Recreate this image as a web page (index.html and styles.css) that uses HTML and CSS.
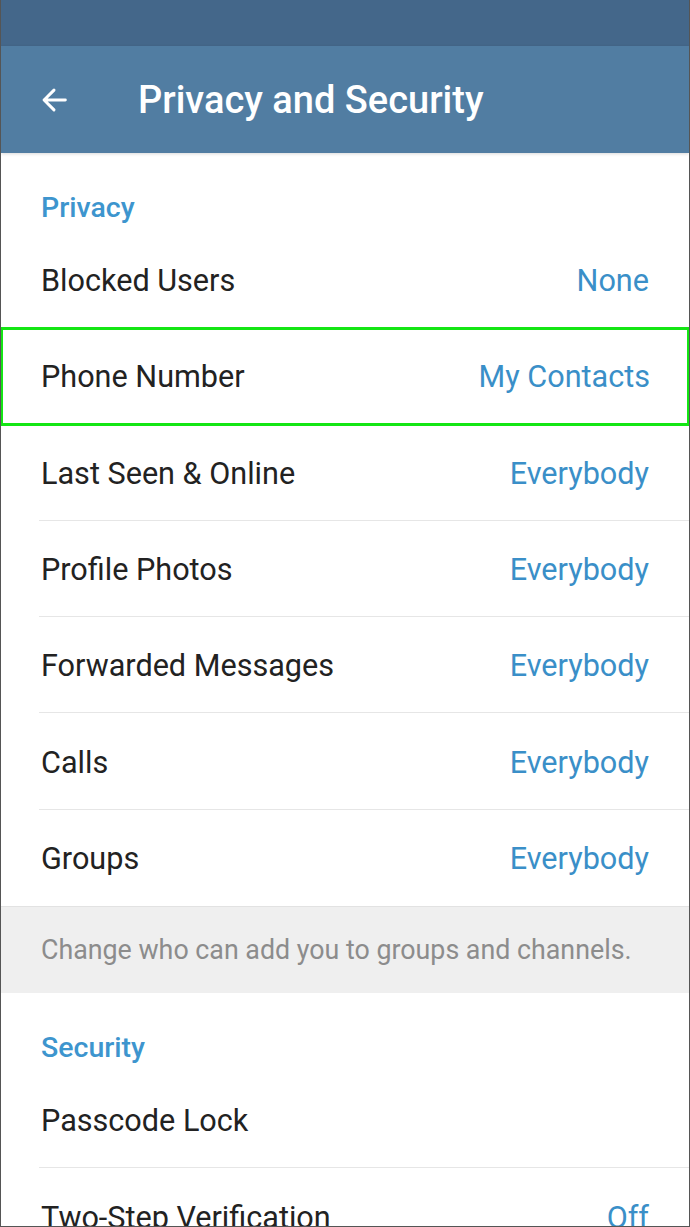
FILE: index.html
```html
<!doctype html>
<html lang="en">
<head>
	<meta charset="UTF-8">
	<title>Privacy and Security</title>
	<link rel="stylesheet" href="styles.css">
</head>
<body>
<div class="screen">
	<div class="statusbar"></div>
	<div class="toolbar">
		<a href="javascript:;" class="back">
			<svg width="34" height="34" viewBox="0 0 24 24"><path d="M20 12H5M12 5l-7 7 7 7" fill="none" stroke="#fff" stroke-width="2.1" stroke-linecap="round" stroke-linejoin="round"/></svg>
		</a>
		<h1>Privacy and Security</h1>
	</div>

	<div class="section">
		<h2>Privacy</h2>
		<ul class="list">
			<li><span>Blocked Users</span><em>None</em></li>
			<li class="hl"><span>Phone Number</span><em>My Contacts</em></li>
			<li><span>Last Seen &amp; Online</span><em>Everybody</em></li>
			<li><span>Profile Photos</span><em>Everybody</em></li>
			<li><span>Forwarded Messages</span><em>Everybody</em></li>
			<li><span>Calls</span><em>Everybody</em></li>
			<li class="last"><span>Groups</span><em>Everybody</em></li>
		</ul>
	</div>
	<p class="hint">Change who can add you to groups and channels.</p>

	<div class="section">
		<h2>Security</h2>
		<ul class="list">
			<li><span>Passcode Lock</span></li>
			<li class="last"><span>Two-Step Verification</span><em>Off</em></li>
		</ul>
	</div>
</div>
</body>
</html>
```

FILE: styles.css
```css
*{
	margin: 0;
	padding: 0;
	box-sizing: border-box;
}
ul {
	list-style: none;
}
html, body {
	height: 100%;
	overflow: hidden;
}
body {
	font-family: Roboto, "Noto Sans", sans-serif;
	background: #fff;
}

.screen {
	height: 1227px;
	border: 1px solid #555;
	border-top: 0;
	overflow: hidden;
}

.statusbar {
	height: 46px;
	background: #44678a;
}
.toolbar {
	height: 107px;
	background: #517da2;
	display: flex;
	align-items: center;
	padding-left: 36px;
	box-shadow: 0 1px 3px rgba(0,0,0,.15);
	position: relative;
}
.toolbar .back {
	display: block;
	width: 34px;
	height: 34px;
	margin-right: 67px;
}
.toolbar svg {
	display: block;
}
.toolbar h1 {
	color: #fff;
	font-size: 38px;
	font-weight: 500;
}

.section h2 {
	height: 79px;
	padding: 38px 0 0 40px;
	color: #3d95ce;
	font-size: 28.5px;
	font-weight: 500;
}

.list li {
	height: 96.3px;
	margin-left: 38px;
	padding: 0 40px 0 2px;
	display: flex;
	align-items: center;
	justify-content: space-between;
	border-bottom: 1px solid #e6e6e6;
	font-size: 30.6px;
	color: #222;
}
.list li span, .list li em {
	position: relative;
	top: 1px;
}
.list li.last {
	border-bottom: 0;
}
.list em {
	font-style: normal;
	color: #3a8fc8;
}
.list li.hl {
	margin-left: 0;
	padding-left: 40px;
	padding-right: 39px;
	outline: 3px solid #14e614;
	outline-offset: -2px;
	border-bottom-color: transparent;
}

.hint {
	height: 87px;
	background: #efefef;
	border-top: 1px solid #e2e2e2;
	padding-left: 40px;
	display: flex;
	align-items: center;
	color: #8c8c8c;
	font-size: 26.8px;
}
```
